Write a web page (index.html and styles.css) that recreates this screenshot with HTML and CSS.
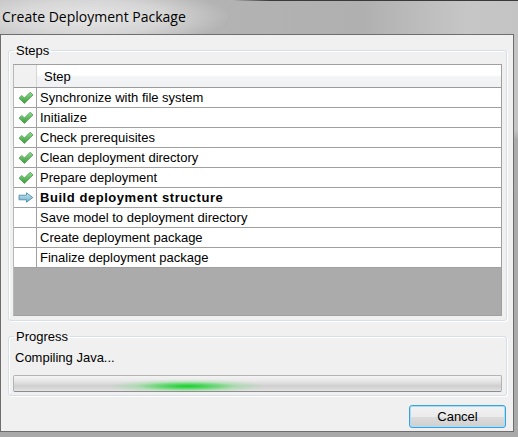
FILE: index.html
```html
<!DOCTYPE html>
<html>
<head>
<meta charset="utf-8">
<title>Create Deployment Package</title>
<link rel="stylesheet" href="styles.css">
</head>
<body>
<div class="window">
  <div class="titlebar">Create Deployment Package</div>
  <div class="client">
    <fieldset class="group steps">
      <legend>Steps</legend>
      <div class="list">
        <div class="row head"><div class="icon"></div><div class="label">Step</div></div>
        <div class="row"><div class="icon"><svg class="check" width="16" height="13" viewBox="0 0 16 13"><defs><linearGradient id="g1" x1="0" y1="0" x2="0" y2="1"><stop offset="0" stop-color="#8fdc8f"/><stop offset="1" stop-color="#3a9a3a"/></linearGradient></defs><path d="M1 7.2 L3.8 4.4 L6.4 7 L12.2 1.2 L15 4 L6.4 12.4 Z" fill="url(#g1)" stroke="#4e9e4e" stroke-width="0.8" stroke-linejoin="round"/></svg></div><div class="label">Synchronize with file system</div></div>
        <div class="row"><div class="icon"><svg class="check" width="16" height="13" viewBox="0 0 16 13"><path d="M1 7.2 L3.8 4.4 L6.4 7 L12.2 1.2 L15 4 L6.4 12.4 Z" fill="url(#g1)" stroke="#4e9e4e" stroke-width="0.8" stroke-linejoin="round"/></svg></div><div class="label">Initialize</div></div>
        <div class="row"><div class="icon"><svg class="check" width="16" height="13" viewBox="0 0 16 13"><path d="M1 7.2 L3.8 4.4 L6.4 7 L12.2 1.2 L15 4 L6.4 12.4 Z" fill="url(#g1)" stroke="#4e9e4e" stroke-width="0.8" stroke-linejoin="round"/></svg></div><div class="label">Check prerequisites</div></div>
        <div class="row"><div class="icon"><svg class="check" width="16" height="13" viewBox="0 0 16 13"><path d="M1 7.2 L3.8 4.4 L6.4 7 L12.2 1.2 L15 4 L6.4 12.4 Z" fill="url(#g1)" stroke="#4e9e4e" stroke-width="0.8" stroke-linejoin="round"/></svg></div><div class="label">Clean deployment directory</div></div>
        <div class="row"><div class="icon"><svg class="check" width="16" height="13" viewBox="0 0 16 13"><path d="M1 7.2 L3.8 4.4 L6.4 7 L12.2 1.2 L15 4 L6.4 12.4 Z" fill="url(#g1)" stroke="#4e9e4e" stroke-width="0.8" stroke-linejoin="round"/></svg></div><div class="label">Prepare deployment</div></div>
        <div class="row current"><div class="icon"><svg class="arrow" width="16" height="11" viewBox="0 0 16 11"><defs><linearGradient id="g2" x1="0" y1="0" x2="0" y2="1"><stop offset="0" stop-color="#c9e6f1"/><stop offset="1" stop-color="#6eaecb"/></linearGradient></defs><path d="M1 3.2 H8.5 V0.8 L14.8 5.5 L8.5 10.2 V7.8 H1 Z" fill="url(#g2)" stroke="#4f8fae" stroke-width="0.9" stroke-linejoin="round"/></svg></div><div class="label">Build deployment structure</div></div>
        <div class="row"><div class="icon"></div><div class="label">Save model to deployment directory</div></div>
        <div class="row"><div class="icon"></div><div class="label">Create deployment package</div></div>
        <div class="row"><div class="icon"></div><div class="label">Finalize deployment package</div></div>
      </div>
    </fieldset>
    <fieldset class="group progress">
      <legend>Progress</legend>
      <div class="status">Compiling Java...</div>
      <div class="bar"></div>
    </fieldset>
    <div class="buttons"><button class="btn">Cancel</button></div>
  </div>
</div>
</body>
</html>
```
FILE: styles.css
```css
html, body {
  margin: 0;
  padding: 0;
}
body {
  width: 518px;
  height: 437px;
  overflow: hidden;
  background: linear-gradient(to bottom, #c4c4c4 0, #c4c4c4 130px, #ababab 140px, #a9a9a9 100%);
  font-family: "Liberation Sans", Arial, sans-serif;
  font-size: 13px;
  color: #000;
}
.window {
  width: 518px;
  height: 437px;
}
.titlebar {
  height: 34px;
  box-sizing: border-box;
  padding: 7px 0 0 2px;
  font-family: "Open Sans", "Noto Sans", sans-serif;
  font-size: 14px;
  line-height: 20px;
  color: #000;
  background:
    linear-gradient(to right, rgba(50,50,50,0) 0, rgba(50,50,50,0) 45%, #3a3a3a 52%, #3a3a3a 100%) top / 100% 1px no-repeat,
    radial-gradient(ellipse 140px 30px at 90px 17px, rgba(232,232,232,0.95) 0, rgba(225,225,225,0.7) 55%, rgba(200,200,200,0) 100%),
    linear-gradient(to right, #c2c2c2 0, #b3b3b3 40%, #b0b0b0 70%, #c6c6c6 90%, #c4c4c4 100%);
}
.client {
  width: 514px;
  height: 398px;
  box-sizing: border-box;
  border: 1px solid #6e6e6e;
  background: #f0f0f0;
  padding: 8px 6px 0 7px;
  display: flex;
  flex-direction: column;
}
.group {
  margin: 0;
  padding: 0 4px 4px 4px;
  border: 1px solid #d5dfe5;
  border-radius: 3px;
  box-shadow: inset 1px 1px 0 #fff, 1px 1px 0 #fff;
  min-width: 0;
}
.group legend {
  margin-left: 1px;
  padding: 0 2px;
  font-size: 13px;
  line-height: 15px;
}
.list {
  margin-top: 6px;
  height: 252px;
  box-sizing: border-box;
  border: 1px solid #a0a0a0;
  border-left-color: #b8b8b8;
  background: #ababab;
}
.row {
  display: grid;
  grid-template-columns: 23px 1fr;
  height: 20px;
  box-sizing: border-box;
  border-bottom: 1px solid #a0a0a0;
  background: #fff;
}
.row .icon {
  border-right: 1px solid #a0a0a0;
  display: flex;
  align-items: center;
  justify-content: center;
}
.row .label {
  padding-left: 3px;
  padding-top: 1px;
  line-height: 18px;
  white-space: nowrap;
}
.row.head {
  height: 23px;
  background: linear-gradient(to bottom, #ffffff 0, #ffffff 45%, #f2f3f5 55%, #f1f2f4 100%);
  border-bottom-color: #9a9a9a;
}
.row.head .icon {
  background: #f1f1f1;
  border-right-color: #d5d5d5;
}
.row.head .label {
  padding-left: 7px;
  padding-top: 1px;
  line-height: 21px;
}
.row.current .label {
  font-weight: bold;
  letter-spacing: 0.55px;
}
.check {
  margin-left: 1px;
}
.arrow {
  margin-left: 1px;
}
.progress {
  margin-top: 8px;
  padding-bottom: 3px;
}
.status {
  margin-top: 6px;
  line-height: 15px;
  padding-left: 2px;
}
.bar {
  margin-top: 10px;
  height: 17px;
  box-sizing: border-box;
  border: 1px solid #b4b4b4;
  border-bottom-color: #8e8e8e;
  border-radius: 2px;
  background:
    radial-gradient(ellipse 78px 7px at 35.5% 68%, rgba(20,210,40,1) 0, rgba(40,215,60,0.7) 30%, rgba(120,230,130,0.35) 65%, rgba(200,240,200,0) 100%),
    linear-gradient(to bottom, #f4f4f4 0, #e8e8e8 30%, #dcdcdc 50%, #cfcfcf 65%, #d8d8d8 85%, #e4e4e4 100%);
}
.buttons {
  display: flex;
  justify-content: flex-end;
  margin-top: 9px;
  padding-right: 1px;
}
.btn {
  width: 97px;
  height: 23px;
  box-sizing: border-box;
  border: 1px solid #3c9fe0;
  border-radius: 3px;
  box-shadow: inset 0 0 0 1px #a8e0f8;
  background: linear-gradient(to bottom, #f2f2f2 0, #ebebeb 50%, #dddddd 51%, #cfcfcf 100%);
  font-family: "Liberation Sans", Arial, sans-serif;
  font-size: 13px;
  color: #000;
  padding: 0;
}
```
